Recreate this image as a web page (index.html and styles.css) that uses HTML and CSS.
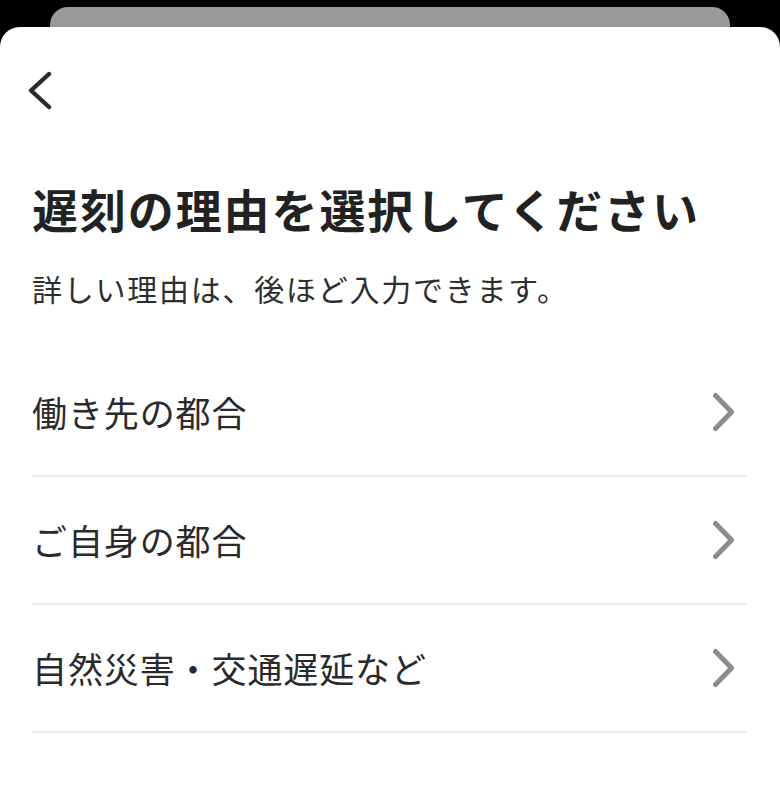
FILE: index.html
```html
<!DOCTYPE html>
<html lang="ja">
<head>
<meta charset="utf-8">
<title>遅刻の理由を選択してください</title>
<link rel="stylesheet" href="styles.css">
</head>
<body>
<div class="screen">
  <div class="back-card"></div>
  <main class="sheet">
    <div class="nav">
      <svg class="back-icon" width="26" height="42" viewBox="0 0 26 42" aria-label="戻る">
        <path d="M21 4 L3 20.5 L21 37" fill="none" stroke="#2b2b2b" stroke-width="4.4" stroke-linecap="round" stroke-linejoin="round"/>
      </svg>
    </div>
    <h1 class="title">遅刻の理由を選択してください</h1>
    <p class="subtitle">詳しい理由は、後ほど入力できます。</p>
    <ul class="list">
      <li class="row">
        <span class="label">働き先の都合</span>
        <svg class="chev" width="24" height="42" viewBox="0 0 24 42"><path d="M3.5 4.5 L19.5 21 L3.5 37.5" fill="none" stroke="#8c8c8c" stroke-width="5" stroke-linecap="round" stroke-linejoin="round"/></svg>
      </li>
      <li class="row">
        <span class="label">ご自身の都合</span>
        <svg class="chev" width="24" height="42" viewBox="0 0 24 42"><path d="M3.5 4.5 L19.5 21 L3.5 37.5" fill="none" stroke="#8c8c8c" stroke-width="5" stroke-linecap="round" stroke-linejoin="round"/></svg>
      </li>
      <li class="row">
        <span class="label">自然災害・交通遅延など</span>
        <svg class="chev" width="24" height="42" viewBox="0 0 24 42"><path d="M3.5 4.5 L19.5 21 L3.5 37.5" fill="none" stroke="#8c8c8c" stroke-width="5" stroke-linecap="round" stroke-linejoin="round"/></svg>
      </li>
    </ul>
  </main>
</div>
</body>
</html>
```
FILE: styles.css
```css
* { box-sizing: border-box; }
html, body {
  margin: 0;
  padding: 0;
  background: #000;
  height: 100%;
}
body {
  font-family: "Noto Sans CJK JP", "Noto Sans", sans-serif;
  color: #262626;
  overflow: hidden;
}
.screen {
  padding-top: 7px;
  height: 811px;
  display: flex;
  flex-direction: column;
}
.back-card {
  margin: 0 50px;
  height: 40px;
  flex: none;
  background: #999999;
  border-radius: 18px 18px 0 0;
}
.sheet {
  margin-top: -20px;
  flex: 1;
  background: #ffffff;
  border-radius: 20px 20px 0 0;
  padding: 0 33px 0 32px;
}
.nav {
  padding-top: 43px;
  height: 85px;
}
.back-icon {
  display: block;
  margin-left: -4px;
}
.title {
  margin: 68px 0 0;
  font-size: 46px;
  line-height: 56px;
  font-weight: 700;
  letter-spacing: 1.9px;
  color: #222222;
  white-space: nowrap;
}
.subtitle {
  margin: 32px 0 0;
  font-size: 30px;
  line-height: 40px;
  font-weight: 400;
  letter-spacing: 1.75px;
  color: #2e2e2e;
  white-space: nowrap;
}
.list {
  list-style: none;
  margin: 41px 0 0;
  padding: 0;
}
.row {
  height: 128px;
  display: flex;
  align-items: center;
  justify-content: space-between;
  border-bottom: 2px solid #e9e9e9;
  padding-right: 11px;
}
.label {
  font-size: 35px;
  line-height: 44px;
  font-weight: 400;
  letter-spacing: 0.9px;
  color: #2a2a2a;
  white-space: nowrap;
}
.chev {
  display: block;
  flex: none;
}
```
